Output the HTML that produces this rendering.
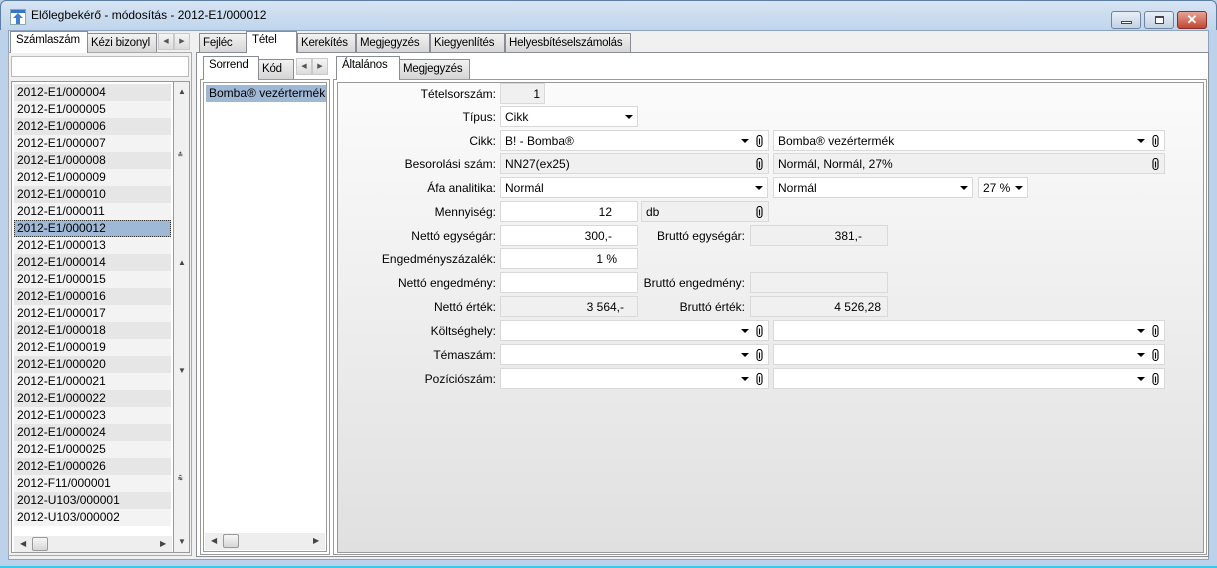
<!DOCTYPE html>
<html><head><meta charset="utf-8">
<style>
*{box-sizing:border-box;margin:0;padding:0}
body{width:1217px;height:568px;overflow:hidden;font-family:"Liberation Sans",sans-serif;font-size:12px;color:#000;background:#bcd2ea;position:relative}
.a{position:absolute}
#title{left:0;top:0;width:1217px;height:30px;background:linear-gradient(#d7e4f3,#c0d5ec);border:1px solid #5d7ea3;border-bottom:none;border-radius:6px 6px 0 0}
#body{left:8px;top:30px;width:1201px;height:530px;background:#f0f0f0;border:1px solid #8da2bd}
.tab{position:absolute;height:20px;border:1px solid #898c95;border-bottom:none;background:linear-gradient(#f2f2f2,#d5d5d5);padding:3px 0 0 3px;white-space:nowrap;overflow:visible;font-size:11.5px;letter-spacing:-0.2px}
.tab.on{background:#fff;height:22px;z-index:2;padding-top:2px;padding-left:5px}
.box{position:absolute;border:1px solid #898c95;background:#fff}
.arr{position:absolute;width:16px;height:17px;border:1px solid #c9c9c9;background:linear-gradient(#f4f4f4,#dcdcdc);font-size:7px;color:#555;text-align:center;line-height:15px}
.row{position:absolute;left:0;width:157px;height:17px;padding:1px 0 0 3px;font-size:12px}
.f{position:absolute;height:21px;border:1px solid #d9d9d9;background:#fff;padding:3px 4px;font-size:12px;white-space:nowrap}
.g{background:#f0f0f0}
.r{text-align:right}
.lb{position:absolute;text-align:right;font-size:12px;width:200px;white-space:nowrap}
.dd{position:absolute;top:8px;width:0;height:0;border-left:4px solid transparent;border-right:4px solid transparent;border-top:4px solid #000}
.clip{position:absolute;top:4px;width:7px;height:12px}
</style></head><body>
<div id="title" class="a">
 <svg class="a" style="left:9px;top:8px" width="16" height="16"><rect x="0.5" y="0.5" width="15" height="15" fill="#fff" stroke="#8aa"/><rect x="1" y="1" width="14" height="3" fill="#3a76c4"/><path d="M8 4 L13 9 H10 V15 H6 V9 H3 Z" fill="#3f7fd0"/></svg>
 <div class="a" style="left:30px;top:7px;font-size:12px">Előlegbekérő - módosítás - 2012-E1/000012</div>
 <div class="a" style="left:1110px;top:10px;width:30px;height:18px;border:1px solid #6d84a0;border-radius:3px;background:linear-gradient(#e8eef6,#c3d2e4)"><div class="a" style="left:9px;top:9px;width:11px;height:3px;background:#fff;border:1px solid #445"></div></div>
 <div class="a" style="left:1143px;top:10px;width:30px;height:18px;border:1px solid #6d84a0;border-radius:3px;background:linear-gradient(#e8eef6,#c3d2e4)"><div class="a" style="left:10px;top:4px;width:9px;height:8px;border:1px solid #445;border-top-width:2px;background:#fff"></div></div>
 <div class="a" style="left:1176px;top:10px;width:30px;height:18px;border:1px solid #83322a;border-radius:3px;background:linear-gradient(#e5a595,#c24634);color:#fff;font-weight:bold;text-align:center;font-size:13px;line-height:16px">✕</div>
</div>
<div id="body" class="a"></div>

<!-- left -->
<div class="tab on" style="left:10px;top:31px;width:78px">Számlaszám</div>
<div class="tab" style="left:87px;top:33px;width:70px;overflow:hidden">Kézi bizonyl</div>
<div class="arr" style="left:158px;top:33px">◀</div><div class="arr" style="left:174px;top:33px">▶</div>
<div class="box" style="left:8px;top:52px;width:184px;height:504px;background:#f0f0f0;border-color:#aaa"></div>
<div class="box" style="left:11px;top:56px;width:178px;height:21px;border-color:#bbb"></div>
<div class="box" style="left:11px;top:81px;width:179px;height:472px;border-color:#999;background:#fff;overflow:hidden">
 <div class="a" style="left:2px;top:2px;width:158px;height:452px;overflow:hidden">
 <div class="row" style="top:0;background:#e6e6e6">2012-E1/000004</div>
 <div class="row" style="top:17px;background:#f3f3f3">2012-E1/000005</div>
 <div class="row" style="top:34px;background:#e6e6e6">2012-E1/000006</div>
 <div class="row" style="top:51px;background:#f3f3f3">2012-E1/000007</div>
 <div class="row" style="top:68px;background:#e6e6e6">2012-E1/000008</div>
 <div class="row" style="top:85px;background:#f3f3f3">2012-E1/000009</div>
 <div class="row" style="top:102px;background:#e6e6e6">2012-E1/000010</div>
 <div class="row" style="top:119px;background:#f3f3f3">2012-E1/000011</div>
 <div class="row" style="top:136px;background:#9fb8d6;outline:1px dotted #333;outline-offset:-1px">2012-E1/000012</div>
 <div class="row" style="top:153px;background:#f3f3f3">2012-E1/000013</div>
 <div class="row" style="top:170px;background:#e6e6e6">2012-E1/000014</div>
 <div class="row" style="top:187px;background:#f3f3f3">2012-E1/000015</div>
 <div class="row" style="top:204px;background:#e6e6e6">2012-E1/000016</div>
 <div class="row" style="top:221px;background:#f3f3f3">2012-E1/000017</div>
 <div class="row" style="top:238px;background:#e6e6e6">2012-E1/000018</div>
 <div class="row" style="top:255px;background:#f3f3f3">2012-E1/000019</div>
 <div class="row" style="top:272px;background:#e6e6e6">2012-E1/000020</div>
 <div class="row" style="top:289px;background:#f3f3f3">2012-E1/000021</div>
 <div class="row" style="top:306px;background:#e6e6e6">2012-E1/000022</div>
 <div class="row" style="top:323px;background:#f3f3f3">2012-E1/000023</div>
 <div class="row" style="top:340px;background:#e6e6e6">2012-E1/000024</div>
 <div class="row" style="top:357px;background:#f3f3f3">2012-E1/000025</div>
 <div class="row" style="top:374px;background:#e6e6e6">2012-E1/000026</div>
 <div class="row" style="top:391px;background:#f3f3f3">2012-F11/000001</div>
 <div class="row" style="top:408px;background:#e6e6e6">2012-U103/000001</div>
 <div class="row" style="top:425px;background:#f3f3f3">2012-U103/000002</div>
 </div>
 <div class="a" style="left:161px;top:0;width:17px;height:470px;background:#f0f0f0;border-left:1px solid #999;font-size:8px;color:#444;text-align:center">
  <div class="a" style="left:4px;top:5px">▲</div><div class="a" style="left:4px;top:68px;font-weight:bold">⩮</div><div class="a" style="left:4px;top:176px">▲</div><div class="a" style="left:4px;top:284px">▼</div><div class="a" style="left:4px;top:392px;font-weight:bold">⩯</div><div class="a" style="left:4px;top:455px">▼</div>
 </div>
 <div class="a" style="left:2px;top:454px;width:158px;height:16px;background:#eee;font-size:8px;color:#444">
  <div class="a" style="left:6px;top:3px">◀</div><div class="a" style="left:18px;top:1px;width:16px;height:14px;border:1px solid #999;border-radius:2px;background:linear-gradient(#f6f6f6,#d6d6d6)"></div><div class="a" style="left:146px;top:3px">▶</div>
 </div>
</div>

<!-- middle tabs -->
<div class="tab" style="left:199px;top:33px;width:48px">Fejléc</div>
<div class="tab on" style="left:246px;top:31px;width:51px">Tétel</div>
<div class="tab" style="left:297px;top:33px;width:59px">Kerekítés</div>
<div class="tab" style="left:356px;top:33px;width:74px">Megjegyzés</div>
<div class="tab" style="left:430px;top:33px;width:75px">Kiegyenlítés</div>
<div class="tab" style="left:505px;top:33px;width:126px">Helyesbítéselszámolás</div>
<div class="box" style="left:196px;top:52px;width:1013px;height:505px;background:#fff;border-color:#898c95"></div>

<div class="tab on" style="left:203px;top:56px;width:56px;height:24px">Sorrend</div>
<div class="tab" style="left:258px;top:59px;width:36px">Kód</div>
<div class="arr" style="left:296px;top:58px">◀</div><div class="arr" style="left:312px;top:58px">▶</div>
<div class="box" style="left:200px;top:79px;width:130px;height:476px;border-color:#999;background:#fff"></div>
<div class="box" style="left:203px;top:82px;width:124px;height:470px;border-color:#999;background:#fff;overflow:hidden">
 <div class="a" style="left:2px;top:2px;width:120px;height:17px;background:#9fb8d6;padding:1px 0 0 3px;white-space:nowrap;overflow:hidden">Bomba® vezértermék</div>
 <div class="a" style="left:1px;top:450px;width:120px;height:17px;background:#eee;font-size:8px;color:#444">
  <div class="a" style="left:6px;top:3px">◀</div><div class="a" style="left:18px;top:1px;width:16px;height:14px;border:1px solid #999;border-radius:2px;background:linear-gradient(#f6f6f6,#d6d6d6)"></div><div class="a" style="left:108px;top:3px">▶</div>
 </div>
</div>

<!-- right -->
<div class="tab on" style="left:336px;top:56px;width:64px;height:24px">Általános</div>
<div class="tab" style="left:399px;top:59px;width:71px">Megjegyzés</div>
<div class="box" style="left:333px;top:79px;width:874px;height:476px;border-color:#999;background:#fff"></div>
<div class="box" style="left:337px;top:82px;width:867px;height:471px;border-color:#999;background:linear-gradient(#fbfbfb,#e0e0e0)"></div>

<svg width="0" height="0" style="position:absolute"><defs><symbol id="c" viewBox="0 0 7 12"><path d="M1 3 A2.5 2.5 0 0 1 6 3 V9 A2.5 2.5 0 0 1 1 9 Z M3.5 3.5 V9.5" fill="none" stroke="#000" stroke-width="1.1"/></symbol></defs></svg>

<div class="lb" style="left:296px;top:87px">Tételsorszám:</div>
<div class="f g r" style="left:500px;top:83px;width:45px">1</div>

<div class="lb" style="left:296px;top:110px">Típus:</div>
<div class="f" style="left:500px;top:106px;width:138px">Cikk<i class="dd" style="left:124px"></i></div>

<div class="lb" style="left:296px;top:134px">Cikk:</div>
<div class="f" style="left:500px;top:130px;width:269px">B! - Bomba®<i class="dd" style="left:240px"></i><svg class="clip" style="left:255px"><use href="#c"/></svg></div>
<div class="f" style="left:773px;top:130px;width:392px">Bomba® vezértermék<i class="dd" style="left:363px"></i><svg class="clip" style="left:378px"><use href="#c"/></svg></div>

<div class="lb" style="left:296px;top:157px">Besorolási szám:</div>
<div class="f g" style="left:500px;top:153px;width:269px">NN27(ex25)<svg class="clip" style="left:255px"><use href="#c"/></svg></div>
<div class="f g" style="left:773px;top:153px;width:392px">Normál, Normál, 27%<svg class="clip" style="left:378px"><use href="#c"/></svg></div>

<div class="lb" style="left:296px;top:181px">Áfa analitika:</div>
<div class="f" style="left:500px;top:177px;width:268px">Normál<i class="dd" style="left:254px"></i></div>
<div class="f" style="left:773px;top:177px;width:200px">Normál<i class="dd" style="left:186px"></i></div>
<div class="f" style="left:978px;top:177px;width:50px">27 %<i class="dd" style="left:36px"></i></div>

<div class="lb" style="left:296px;top:205px">Mennyiség:</div>
<div class="f r" style="left:500px;top:201px;width:138px;padding-right:25px">12</div>
<div class="f g" style="left:641px;top:201px;width:128px">db<svg class="clip" style="left:114px"><use href="#c"/></svg></div>

<div class="lb" style="left:296px;top:229px">Nettó egységár:</div>
<div class="f r" style="left:500px;top:225px;width:138px;padding-right:25px">300,-</div>
<div class="lb" style="left:545px;top:229px">Bruttó egységár:</div>
<div class="f g r" style="left:750px;top:225px;width:138px;padding-right:25px">381,-</div>

<div class="lb" style="left:296px;top:252px">Engedményszázalék:</div>
<div class="f r" style="left:500px;top:248px;width:138px;padding-right:20px">1 %</div>

<div class="lb" style="left:296px;top:276px">Nettó engedmény:</div>
<div class="f" style="left:500px;top:272px;width:138px"></div>
<div class="lb" style="left:545px;top:276px">Bruttó engedmény:</div>
<div class="f g" style="left:750px;top:272px;width:138px"></div>

<div class="lb" style="left:296px;top:300px">Nettó érték:</div>
<div class="f g r" style="left:500px;top:296px;width:138px;padding-right:13px">3 564,-</div>
<div class="lb" style="left:545px;top:300px">Bruttó érték:</div>
<div class="f g r" style="left:750px;top:296px;width:138px;padding-right:6px">4 526,28</div>

<div class="lb" style="left:296px;top:324px">Költséghely:</div>
<div class="f" style="left:500px;top:320px;width:269px"><i class="dd" style="left:240px"></i><svg class="clip" style="left:255px"><use href="#c"/></svg></div>
<div class="f" style="left:773px;top:320px;width:392px"><i class="dd" style="left:363px"></i><svg class="clip" style="left:378px"><use href="#c"/></svg></div>

<div class="lb" style="left:296px;top:348px">Témaszám:</div>
<div class="f" style="left:500px;top:344px;width:269px"><i class="dd" style="left:240px"></i><svg class="clip" style="left:255px"><use href="#c"/></svg></div>
<div class="f" style="left:773px;top:344px;width:392px"><i class="dd" style="left:363px"></i><svg class="clip" style="left:378px"><use href="#c"/></svg></div>

<div class="lb" style="left:296px;top:372px">Pozíciószám:</div>
<div class="f" style="left:500px;top:368px;width:269px"><i class="dd" style="left:240px"></i><svg class="clip" style="left:255px"><use href="#c"/></svg></div>
<div class="f" style="left:773px;top:368px;width:392px"><i class="dd" style="left:363px"></i><svg class="clip" style="left:378px"><use href="#c"/></svg></div>

<div class="a" style="left:0;top:566px;width:1217px;height:2px;background:#3cc8e8"></div>
</body></html>
